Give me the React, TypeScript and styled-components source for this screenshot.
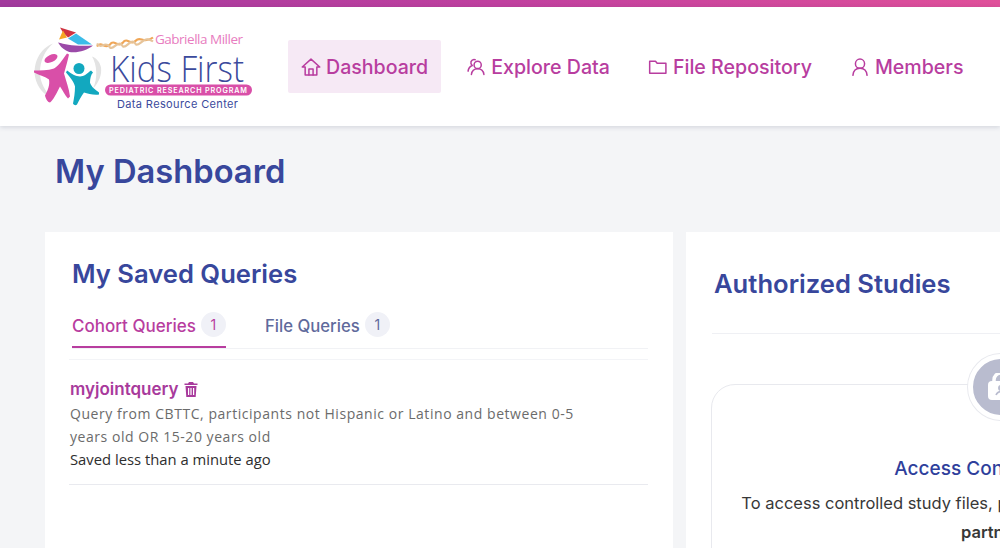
import styled, { createGlobalStyle } from 'styled-components';

const GlobalStyle = createGlobalStyle`
  html, body {
    margin: 0;
    padding: 0;
    background: #fff;
    overflow: hidden;
  }
`;

const Page = styled.div`
  width: 1000px;
  height: 548px;
  overflow: hidden;
  background: #f4f5f7;
  font-family: Inter, "Liberation Sans", sans-serif;
`;

const TopStripe = styled.div`
  height: 7px;
  background: linear-gradient(90deg, #a23a9d 0%, #c0409f 50%, #e0509a 100%);
`;

const Header = styled.header`
  height: 119px;
  background: #fff;
  box-shadow: 0 1px 5px rgba(40, 50, 90, 0.18);
  display: flex;
  align-items: center;
  padding-left: 32px;
  position: relative;
`;

const LogoBox = styled.div`
  width: 222px;
  height: 90px;
  flex: none;
  margin-right: 34px;
`;

const Nav = styled.nav`
  display: flex;
  align-items: center;
  gap: 12px;
`;

const NavItem = styled.a<{ $active?: boolean }>`
  height: 53px;
  display: flex;
  align-items: center;
  gap: 5px;
  padding: 0 13px;
  border-radius: 2px;
  background: ${props => (props.$active ? '#f6e9f5' : 'transparent')};
  color: #b83d9f;
  font-size: 19.6px;
  font-weight: 500;
  white-space: nowrap;
`;

const Title = styled.h1`
  margin: 0;
  padding: 27px 0 0 55px;
  height: 106px;
  box-sizing: border-box;
  font-size: 32.7px;
  line-height: 36px;
  font-weight: 600;
  color: #38479c;
`;

const Columns = styled.div`
  display: flex;
  gap: 13px;
  padding-left: 45px;
`;

const Card = styled.section<{ $width: number }>`
  width: ${props => props.$width}px;
  flex: none;
  height: 320px;
  background: #fff;
  box-sizing: border-box;
`;

const LeftBody = styled.div`
  padding: 27px 25px 0 27px;
`;

const CardTitle = styled.h2`
  margin: 0;
  font-size: 25.6px;
  line-height: 30px;
  font-weight: 600;
  color: #38479c;
`;

const Tabs = styled.div`
  display: flex;
  gap: 39px;
  margin-top: 23px;
  height: 36px;
  border-bottom: 1px solid #f1f2f5;
`;

const Tab = styled.div<{ $active?: boolean }>`
  display: flex;
  align-items: flex-start;
  gap: 5px;
  height: 36px;
  box-sizing: border-box;
  border-bottom: ${props => (props.$active ? '2px solid #b83d9f' : 'none')};
  color: ${props => (props.$active ? '#b83d9f' : '#5f6a9c')};
  font-size: ${props => (props.$active ? '17px' : '16.7px')};
  line-height: 28px;
  font-weight: 500;
`;

const Count = styled.span`
  width: 25px;
  height: 25px;
  border-radius: 50%;
  background: #f0f1f7;
  display: flex;
  align-items: center;
  justify-content: center;
  font-size: 14px;
  font-weight: 400;
`;

const QueryRow = styled.div`
  margin: 10px 0 0 -3px;
  padding: 16px 0 13px 1px;
  border-top: 1px solid #f3f4f7;
  border-bottom: 1px solid #e9eaef;
  font-family: "Open Sans", sans-serif;
`;

const QueryName = styled.div`
  display: flex;
  align-items: center;
  gap: 5px;
  height: 26px;
  font-family: Inter, sans-serif;
  font-size: 17px;
  font-weight: 600;
  color: #a83a9c;
`;

const QueryText = styled.div`
  font-size: 14px;
  line-height: 23px;
  letter-spacing: 0.55px;
  color: #6b6b6b;
  width: 530px;
`;

const SavedText = styled.div`
  font-size: 14.8px;
  line-height: 23px;
  color: #2e2e2e;
`;

const RightTitle = styled.h2`
  margin: 0 0 0 26px;
  height: 102px;
  box-sizing: border-box;
  padding: 36px 0 0 2px;
  border-bottom: 1px solid #eff0f4;
  font-size: 25.6px;
  line-height: 32px;
  font-weight: 600;
  color: #38479c;
`;

const AccessBox = styled.div`
  position: relative;
  margin: 50px 0 0 25px;
  height: 300px;
  width: 580px;
  box-sizing: border-box;
  border: 1px solid #e8e9ee;
  border-radius: 24px;
  padding-top: 72px;
  text-align: center;
`;

const LockBadge = styled.div`
  position: absolute;
  left: calc(50% - 33px);
  top: -31px;
  width: 56px;
  height: 56px;
  border-radius: 50%;
  background: #b9bccf;
  border: 5px solid #fff;
  box-shadow: 0 0 0 1px #e8e9ee;
  display: flex;
  align-items: center;
  justify-content: center;
`;

const AccessTitle = styled.div`
  font-size: 19px;
  line-height: 24px;
  font-weight: 500;
  color: #2f3f9c;
`;

const AccessText = styled.div`
  margin-top: 8px;
  font-size: 16.5px;
  line-height: 29px;
  color: #383838;

  strong {
    font-weight: 600;
    padding-right: 12px;
  }
`;

function Logo() {
  return (
    <svg width="222" height="90" viewBox="32 21.5 222 90" fill="none">
      {/* grey ring behind the figures */}
      <path d="M53 43C40 48 33 62 35 76C37 87 44 94 52 98C45 90 40 82 40 72C40 60 45 50 53 43Z" fill="#e3e3e3" />
      <path d="M92 56C97 64 98 78 93 88C99 82 102 74 101 67C100 62 97 58 92 56Z" fill="#e3e3e3" />
      {/* kite */}
      <path d="M60 27L76 32L68 37L63 32Z" fill="#cf3240" />
      <path d="M59 39L63 30L67 37Z" fill="#f5a623" />
      <path d="M68 38L76 33L92 44L78 44Z" fill="#3bbce8" />
      <path d="M58 42C66 44 74 46 93 45C86 51 72 54 66 50C62 48 60 45 58 42Z" fill="#9b4aa8" />
      {/* dna strand */}
      <path d="M97 46C101 39 105 50 110 44C114 38 118 48 123 42C127 36 131 46 136 40C140 35 144 44 153 37" stroke="#f0a656" strokeWidth="2.200" />
      <path d="M97 43C101 50 105 39 110 47C114 50 118 38 123 46C127 48 131 36 136 44C140 46 144 34 153 41" stroke="#e6c49a" strokeWidth="2.200" />
      {/* figures */}
      <ellipse cx="51" cy="58" rx="7" ry="3.600" transform="rotate(-25 51 58)" fill="#d94fa8" />
      <path d="M67 53C62 60 58 66 54 68C48 70 40 70 34 70L34 72C40 75 45 76 49 79C50 84 48 90 45 95C46 99 48 102 50 102C53 100 57 92 60 86C63 90 65 95 68 98L70 96C69 88 66 80 64 73C66 66 68 59 69 54Z" fill="#d94fa8" />
      <circle cx="79" cy="68" r="5.500" fill="#12a8bf" />
      <path d="M66 72C70 77 74 81 75 86C75 92 74 98 73 103C74 105 76 105 77 104C79 100 81 96 84 92C88 93 94 95 99 94L99 92C95 89 91 86 90 82C90 78 91 74 93 72L91 70C87 73 84 76 80 76C76 76 71 73 67 70Z" fill="#12a8bf" />
      {/* wordmark */}
      <text x="155" y="43" fontFamily="Open Sans, sans-serif" fontSize="13.500" fill="#e87cc0" textLength="88" lengthAdjust="spacing">Gabriella Miller</text>
      <text x="110" y="81" fontFamily="Open Sans, sans-serif" fontSize="36" fontWeight="300" fill="#3b4a9c" textLength="134" lengthAdjust="spacingAndGlyphs">Kids First</text>
      <rect x="105" y="84" width="147" height="11" rx="5.500" fill="#d94fa8" />
      <text x="109" y="92.500" fontFamily="Inter, sans-serif" fontSize="7.200" fontWeight="600" fill="#fff" textLength="138" lengthAdjust="spacing">PEDIATRIC RESEARCH PROGRAM</text>
      <text x="117" y="107" fontFamily="Inter, sans-serif" fontSize="11" fill="#3b4a9c" textLength="121" lengthAdjust="spacing">Data Resource Center</text>
    </svg>
  );
}

const iconProps = {
  width: 20,
  height: 20,
  viewBox: '0 0 24 24',
  fill: 'none',
  stroke: 'currentColor',
  strokeWidth: 1.8,
  strokeLinejoin: 'round' as const,
  strokeLinecap: 'round' as const,
};

function HomeIcon() {
  return (
    <svg {...iconProps}>
      <path d="M1.500 12L12 2.500 22.500 12H19v9.500H5V12H1.500z" />
      <path d="M9.500 21.500v-7h5v7" />
    </svg>
  );
}

function ExploreIcon() {
  return (
    <svg {...iconProps}>
      <circle cx="14" cy="9.500" r="4.300" />
      <path d="M6.500 21c.5-4.500 3.500-7 7.500-7s7 2.500 7.500 7" />
      <path d="M11 3.200A4.300 4.300 0 0 0 6 5.500c-.6 2 .2 3.500 1.500 4.700C4.500 11.500 2.800 14 2.500 17" />
    </svg>
  );
}

function FolderIcon() {
  return (
    <svg {...iconProps}>
      <path d="M2 5h7l2 2.500h10.500V19.500H2z" />
    </svg>
  );
}

function PersonIcon() {
  return (
    <svg {...iconProps}>
      <circle cx="12" cy="8" r="5.500" />
      <path d="M3.500 22c.5-5.500 3.500-8.500 8.500-8.500s8 3 8.500 8.500" />
    </svg>
  );
}

function TrashIcon() {
  return (
    <svg width="14" height="15" viewBox="0 0 14 15" fill="#a83a9c">
      <path d="M5 0h4l1 1.500h3.500V3H.5V1.500H4zM1.500 4h11l-.8 11H2.300zM4 6v7h1.200V6zm2.400 0v7h1.200V6zm2.600 0v7h1.200V6z" fillRule="evenodd" />
    </svg>
  );
}

function LockIcon() {
  return (
    <svg width="26" height="28" viewBox="0 0 26 28">
      <rect y="8" width="26" height="19" rx="4" fill="#fff" />
      <path d="M6 8.500V7a7 7 0 0 1 14 0v1.500" fill="none" stroke="#fff" strokeWidth="3.500" />
      <circle cx="13" cy="15" r="3" fill="#b9bccf" />
      <path d="M8 22c1-2.500 3-3.500 5-3.500s4 1 5 3.500" fill="none" stroke="#b9bccf" strokeWidth="1.600" />
    </svg>
  );
}

export default function App() {
  return (
    <Page>
      <GlobalStyle />
      <TopStripe />
      <Header>
        <LogoBox>
          <Logo />
        </LogoBox>
        <Nav>
          <NavItem $active><HomeIcon />Dashboard</NavItem>
          <NavItem><ExploreIcon />Explore Data</NavItem>
          <NavItem><FolderIcon />File Repository</NavItem>
          <NavItem><PersonIcon />Members</NavItem>
        </Nav>
      </Header>
      <Title>My Dashboard</Title>
      <Columns>
        <Card $width={628}>
          <LeftBody>
            <CardTitle>My Saved Queries</CardTitle>
            <Tabs>
              <Tab $active>Cohort Queries <Count>1</Count></Tab>
              <Tab>File Queries <Count>1</Count></Tab>
            </Tabs>
            <QueryRow>
              <QueryName>myjointquery <TrashIcon /></QueryName>
              <QueryText>Query from CBTTC, participants not Hispanic or Latino and between 0-5 years old OR 15-20 years old</QueryText>
              <SavedText>Saved less than a minute ago</SavedText>
            </QueryRow>
          </LeftBody>
        </Card>
        <Card $width={640}>
          <RightTitle>Authorized Studies</RightTitle>
          <AccessBox>
            <LockBadge><LockIcon /></LockBadge>
            <AccessTitle>Access Controlled Files</AccessTitle>
            <AccessText>
              To access controlled study files, please sign in to a data repository<br />
              <strong>partners</strong>
            </AccessText>
          </AccessBox>
        </Card>
      </Columns>
    </Page>
  );
}
